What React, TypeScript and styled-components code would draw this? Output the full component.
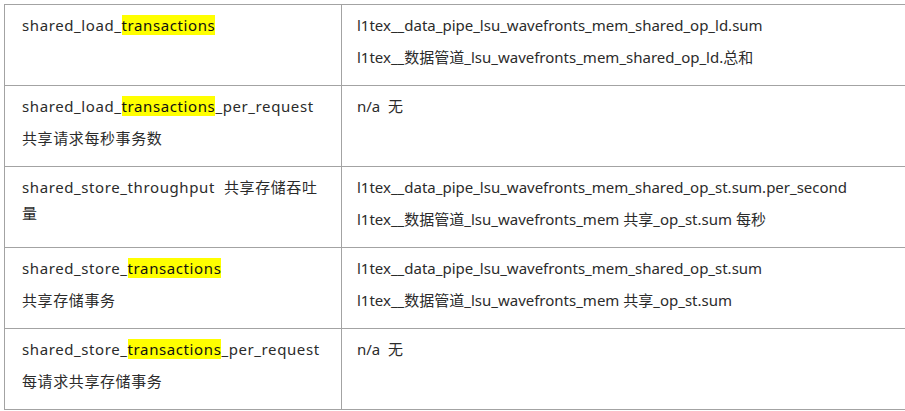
import React from "react";
import styled, { createGlobalStyle } from "styled-components";

const Global = createGlobalStyle`
  html, body { margin: 0; padding: 0; background: #ffffff; overflow: hidden; }
  body {
    font-family: "Noto Sans", "Noto Sans CJK SC", sans-serif;
    font-size: 15px;
    color: #2b2b2b;
  }
`;

const Table = styled.div`
  margin: 4px 0 0 4px;
  width: 930px;
  border-top: 1px solid #a3a3a3;
  border-left: 1px solid #a3a3a3;
`;

const Row = styled.div`
  display: grid;
  grid-template-columns: 337px 1fr;
  height: 81px;
  box-sizing: border-box;
  border-bottom: 1px solid #a3a3a3;
`;

const Cell = styled.div<{ $first?: boolean }>`
  box-sizing: border-box;
  padding: 7px 16px 0 ${(p) => (p.$first ? "17px" : "15px")};
  border-right: ${(p) => (p.$first ? "1px solid #a3a3a3" : "none")};
  letter-spacing: ${(p) => (p.$first ? "0.6px" : "0")};
  overflow: hidden;
`;

const Para = styled.p<{ $nowrap?: boolean }>`
  margin: 0 0 6px;
  line-height: 26px;
  white-space: ${(p) => (p.$nowrap ? "pre" : "pre-wrap")};
`;

const Mark = styled.span`
  background: #ffff00;
  color: #111;
`;

type RowData = { left: React.ReactNode[]; right: React.ReactNode[] };

const rows: RowData[] = [
  {
    left: [<>shared_load_<Mark>transactions</Mark></>],
    right: [
      "l1tex__data_pipe_lsu_wavefronts_mem_shared_op_ld.sum",
      "l1tex__数据管道_lsu_wavefronts_mem_shared_op_ld.总和",
    ],
  },
  {
    left: [
      <>shared_load_<Mark>transactions</Mark>_per_request</>,
      "共享请求每秒事务数",
    ],
    right: ["n/a  无"],
  },
  {
    left: ["shared_store_throughput  共享存储吞吐量"],
    right: [
      "l1tex__data_pipe_lsu_wavefronts_mem_shared_op_st.sum.per_second",
      "l1tex__数据管道_lsu_wavefronts_mem 共享_op_st.sum 每秒",
    ],
  },
  {
    left: [<>shared_store_<Mark>transactions</Mark></>, "共享存储事务"],
    right: [
      "l1tex__data_pipe_lsu_wavefronts_mem_shared_op_st.sum",
      "l1tex__数据管道_lsu_wavefronts_mem 共享_op_st.sum",
    ],
  },
  {
    left: [
      <>shared_store_<Mark>transactions</Mark>_per_request</>,
      "每请求共享存储事务",
    ],
    right: ["n/a  无"],
  },
];

export default function App() {
  return (
    <>
      <Global />
      <Table>
        {rows.map((r, i) => (
          <Row key={i}>
            <Cell $first>
              {r.left.map((t, j) => (
                <Para key={j}>{t}</Para>
              ))}
            </Cell>
            <Cell>
              {r.right.map((t, j) => (
                <Para key={j} $nowrap>
                  {t}
                </Para>
              ))}
            </Cell>
          </Row>
        ))}
      </Table>
    </>
  );
}
